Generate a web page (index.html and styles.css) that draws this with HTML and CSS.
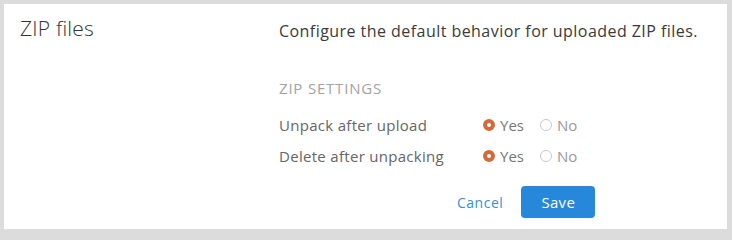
FILE: index.html
```html
<!DOCTYPE html>
<html>
<head>
<meta charset="utf-8">
<link rel="stylesheet" href="styles.css">
</head>
<body>
<div class="card">
  <div class="side">
    <h2 class="title">ZIP files</h2>
  </div>
  <div class="main">
    <p class="desc">Configure the default behavior for uploaded ZIP files.</p>
    <h3 class="section">ZIP SETTINGS</h3>
    <div class="row">
      <span class="label">Unpack after upload</span>
      <span class="opts">
        <span class="opt"><span class="radio on"></span><span class="yes">Yes</span></span>
        <span class="opt"><span class="radio"></span><span class="no">No</span></span>
      </span>
    </div>
    <div class="row">
      <span class="label">Delete after unpacking</span>
      <span class="opts">
        <span class="opt"><span class="radio on"></span><span class="yes">Yes</span></span>
        <span class="opt"><span class="radio"></span><span class="no">No</span></span>
      </span>
    </div>
    <div class="actions">
      <a class="cancel">Cancel</a>
      <button class="save">Save</button>
    </div>
  </div>
</div>
</body>
</html>
```
FILE: styles.css
```css
html, body {
  margin: 0;
  padding: 0;
  background: #dcdcdc;
  font-family: "Open Sans", "DejaVu Sans", sans-serif;
}
body {
  padding: 4px 5px 5px 4px;
}
.card {
  background: #fff;
  height: 225px;
  display: flex;
}
.side {
  width: 259px;
  padding: 10px 0 0 16px;
  box-sizing: border-box;
}
.title {
  margin: 0;
  font-size: 21px;
  font-weight: 300;
  color: #333;
  line-height: 28px;
  letter-spacing: 0.2px;
}
.main {
  padding-top: 15px;
  padding-left: 16px;
  display: flex;
  flex-direction: column;
}
.desc {
  margin: 0;
  font-size: 16px;
  color: #3a3a3a;
  line-height: 24px;
  letter-spacing: 0.45px;
}
.section {
  margin: 35px 0 0 0;
  font-size: 15px;
  font-weight: 400;
  color: #a3a3a3;
  line-height: 20px;
  letter-spacing: 0.8px;
}
.row {
  display: flex;
  align-items: center;
  height: 31px;
}
.section + .row { margin-top: 11px; }
.label {
  width: 204px;
  font-size: 15px;
  color: #666;
  letter-spacing: 0.3px;
}
.opts {
  display: flex;
  gap: 16px;
  font-size: 15px;
}
.opt {
  display: flex;
  align-items: center;
  gap: 5px;
}
.radio {
  width: 12px;
  height: 12px;
  border-radius: 50%;
  border: 1px solid #c8c8c8;
  box-sizing: border-box;
  background: #fff;
}
.radio.on {
  border: 4px solid #d4693c;
  background: #fff;
}
.yes { color: #777; }
.no { color: #999; }
.actions {
  display: flex;
  align-items: center;
  margin-top: 15px;
  margin-left: 178px;
  gap: 18px;
}
.cancel {
  color: #3b8fd6;
  font-size: 14px;
  letter-spacing: 0.5px;
}
.save {
  background: #2788db;
  color: #fff;
  border: none;
  border-radius: 4px;
  width: 74px;
  height: 32px;
  font-family: inherit;
  font-size: 15px;
  letter-spacing: 0.3px;
}
```
